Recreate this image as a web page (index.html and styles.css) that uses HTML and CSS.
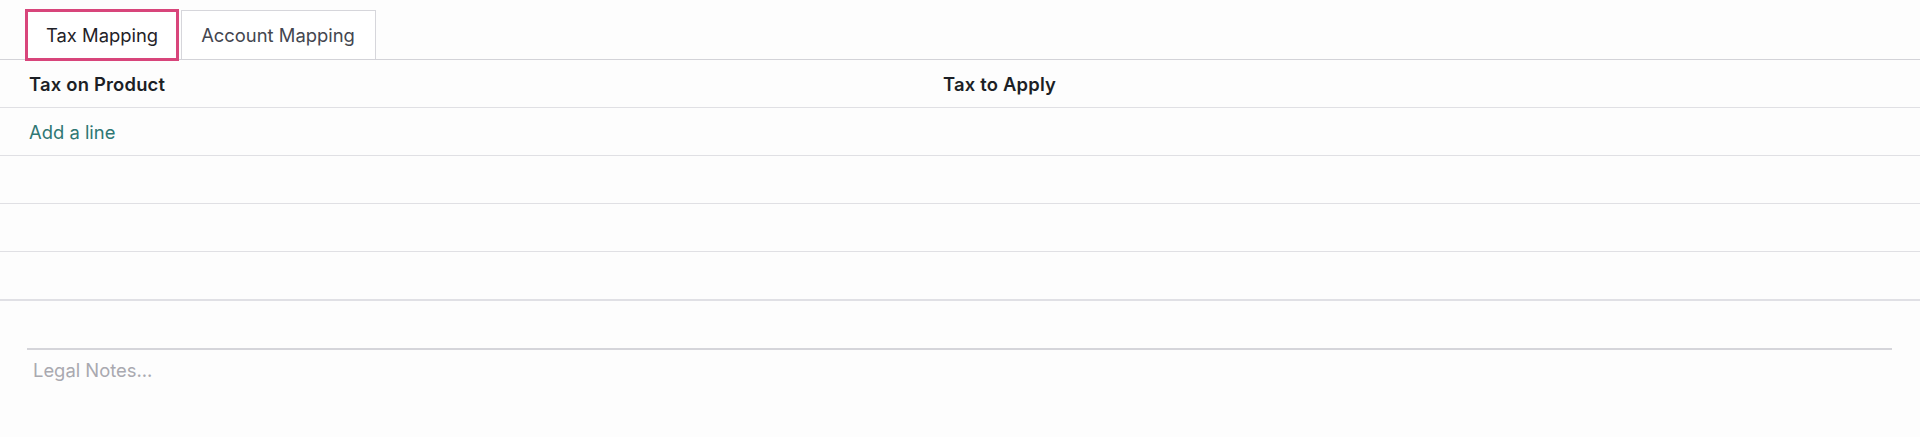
FILE: index.html
```html
<!DOCTYPE html>
<html>
<head>
	<title>Fiscal Position</title>
	<link rel="stylesheet" href="styles.css">
</head>
<body>
	<div class="tabs">
		<div class="tab active">Tax Mapping</div>
		<div class="tab">Account Mapping</div>
	</div>
	<div class="lines">
		<div class="row head">
			<div class="cell first">Tax on Product</div>
			<div class="cell">Tax to Apply</div>
		</div>
		<div class="row">
			<div class="cell first"><a class="add-line" href="#">Add a line</a></div>
			<div class="cell"></div>
		</div>
		<div class="row"><div class="cell first"></div><div class="cell"></div></div>
		<div class="row"><div class="cell first"></div><div class="cell"></div></div>
		<div class="row last"><div class="cell first"></div><div class="cell"></div></div>
	</div>
	<div class="notes">
		<div class="notes-field">Legal Notes...</div>
	</div>
</body>
</html>
```

FILE: styles.css
```css
body {
  margin: 0;
  background-color: #fdfdfd;
  font-family: Inter, "Liberation Sans", sans-serif;
  font-size: 18.4px;
  color: #1f2228;
}

.tabs {
  display: flex;
  align-items: flex-start;
  height: 49px;
  padding: 10px 0 0 25px;
  border-bottom: 1px solid #d3d3d8;
}

.tab {
  display: flex;
  align-items: center;
  box-sizing: border-box;
  height: 49px;
  padding: 0 20px 0 19px;
  margin-left: 2px;
  border: 1px solid #d6d6db;
  border-bottom: none;
  color: #44464f;
  background-color: #fff;
}

.tab.active {
  height: 52px;
  margin: -1px 0 0 0;
  padding: 0 18px;
  border: 3px solid #d8457b;
  color: #1f2228;
}

.row {
  display: flex;
  height: 47px;
  border-bottom: 1px solid #e0e0e4;
}

.row.head {
  font-weight: 600;
  letter-spacing: 0.2px;
  color: #1c1f25;
}

.row.last {
  border-bottom: 2px solid #e0e0e5;
}

.cell {
  display: flex;
  align-items: center;
  padding-left: 29px;
  flex: 1;
}

.cell.first {
  flex: 0 0 885px;
}

.add-line {
  color: #2f7774;
  text-decoration: none;
}

.notes {
  padding: 47px 28px 0 27px;
}

.notes-field {
  border-top: 2px solid #d5d5da;
  padding: 6px 0 0 6px;
  line-height: 28px;
  color: #a9a9b0;
}
```
